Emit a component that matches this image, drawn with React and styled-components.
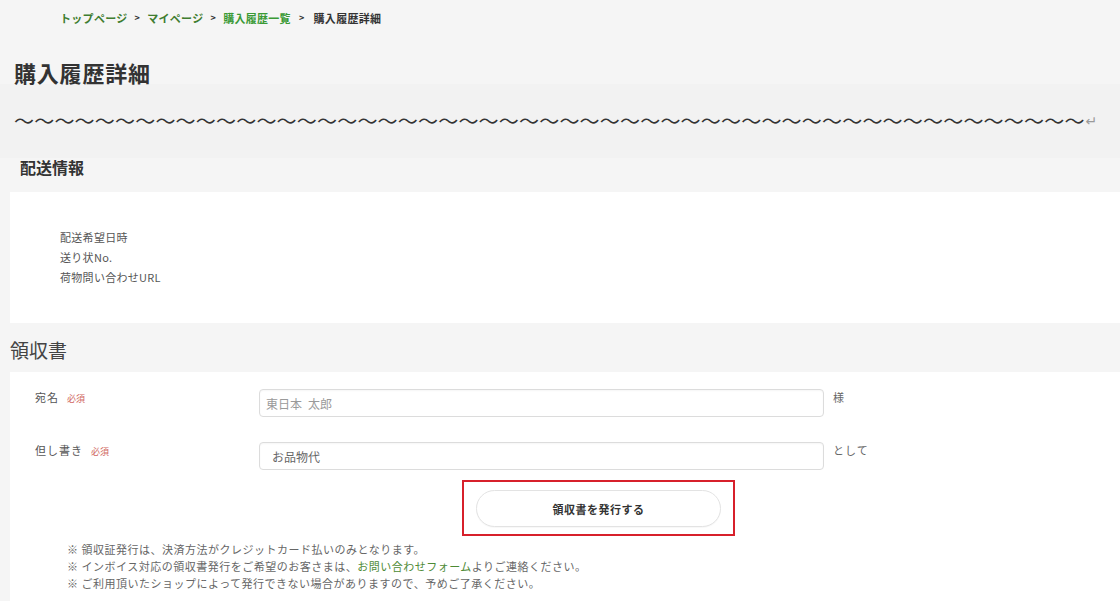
import React from "react";
import styled, { createGlobalStyle } from "styled-components";

const GlobalStyle = createGlobalStyle`
  html, body { margin: 0; padding: 0; background: #f5f5f5; }
  body { font-family: "Noto Sans CJK JP", "Noto Sans", sans-serif; color: #333; }
  #root { min-height: 100vh; }
  * { box-sizing: border-box; }
`;

const Page = styled.div`
  background: #f5f5f5;
  min-height: 601px;
  overflow: hidden;
`;

const Breadcrumb = styled.nav`
  display: flex;
  align-items: center;
  padding: 8px 0 0 60px;
  height: 28px;
  font-size: 11px;
  line-height: 20px;
  font-weight: 700;
  letter-spacing: 0.3px;
`;

const Crumb = styled.a`
  color: ${(p) => (p.$bright ? "#3a9a35" : "#3f7d30")};
  text-decoration: none;
`;

const Current = styled.span`
  color: #333;
`;

const Sep = styled.span`
  color: #333;
  font-size: 9px;
  margin: 0 ${(p) => (p.$wide ? "9px" : "7px")} 0 ${(p) => (p.$wide ? "8px" : "7px")};
`;

const Title = styled.h1`
  margin: 32px 0 0 14px;
  font-size: 22px;
  line-height: 24px;
  height: 24px;
  font-weight: 700;
  letter-spacing: 0.8px;
  color: #333;
`;

const WaveBand = styled.div`
  background: #f2f2f2;
  height: 74px;
  display: flex;
  align-items: center;
  padding-left: 14px;
  white-space: nowrap;
  overflow: hidden;
`;

const Wave = styled.span`
  font-size: 20px;
  line-height: 24px;
  letter-spacing: 0.2px;
  color: #333;
`;

const ReturnMark = styled.span`
  font-family: "DejaVu Sans", sans-serif;
  font-size: 14px;
  color: #9a9a9a;
  margin-left: 1px;
  line-height: 24px;
`;

const SectionHeading = styled.h2`
  margin: 0 0 16px 20px;
  font-size: 16px;
  line-height: 18px;
  font-weight: 700;
  color: #333;
`;

const Panel = styled.section`
  background: #fff;
  margin-left: 10px;
  padding: ${(p) => p.$pad};
  min-height: ${(p) => p.$minh || "0"};
`;

const InfoLine = styled.div`
  font-size: 11px;
  line-height: 20px;
  color: #555;
  letter-spacing: 0.3px;
`;

const ReceiptHeading = styled.h2`
  margin: 0;
  padding: 15px 0 10px 10px;
  font-size: 19px;
  line-height: 24px;
  font-weight: 400;
  color: #444;
`;

const Row = styled.div`
  display: flex;
  align-items: flex-start;
  margin-bottom: ${(p) => p.$mb || "0"};
`;

const Label = styled.div`
  width: 224px;
  font-size: 11px;
  line-height: 16px;
  color: #555;
  letter-spacing: 1px;
`;

const Required = styled.span`
  color: #d0665e;
  font-size: 9px;
  margin-left: 8px;
  letter-spacing: 0;
`;

const Input = styled.input`
  width: 565px;
  height: 28px;
  border: 1px solid #dcdcdc;
  border-radius: 4px;
  box-shadow: inset 0 1px 2px rgba(0, 0, 0, 0.04);
  padding: 0 0 0 ${(p) => p.$padl};
  font-family: "Noto Sans CJK JP", sans-serif;
  font-size: 12px;
  color: #666;
  background: #fff;
  outline: none;
  &::placeholder { color: #9a9a9a; }
`;

const Suffix = styled.span`
  margin-left: 9px;
  font-size: 11px;
  line-height: 16px;
  color: #666;
  letter-spacing: 1px;
`;

const Highlight = styled.div`
  width: 273px;
  height: 56px;
  margin: 10px 0 0 427px;
  border: 2px solid #d7202b;
  padding: 8px 12px;
`;

const IssueButton = styled.button`
  width: 245px;
  height: 37px;
  border: 1px solid #e3e3e3;
  border-radius: 19px;
  background: #fff;
  box-shadow: 0 1px 1px rgba(0, 0, 0, 0.03);
  font-family: "Noto Sans CJK JP", sans-serif;
  font-size: 11px;
  font-weight: 700;
  color: #333;
  letter-spacing: 0.5px;
  cursor: pointer;
`;

const Notes = styled.div`
  padding: 5px 0 0 32px;
  font-size: 11px;
  line-height: 17px;
  color: #666;
  letter-spacing: 0.5px;
`;

const NoteLink = styled.a`
  color: #4d8a35;
  text-decoration: none;
`;

export default function App() {
  return (
    <Page>
      <GlobalStyle />
      <Breadcrumb>
        <Crumb href="#">トップページ</Crumb>
        <Sep>&gt;</Sep>
        <Crumb href="#">マイページ</Crumb>
        <Sep>&gt;</Sep>
        <Crumb href="#" $bright>購入履歴一覧</Crumb>
        <Sep $wide>&gt;</Sep>
        <Current>購入履歴詳細</Current>
      </Breadcrumb>
      <Title>購入履歴詳細</Title>
      <WaveBand>
        <Wave>{"〜".repeat(53)}</Wave>
        <ReturnMark>↵</ReturnMark>
      </WaveBand>
      <SectionHeading>配送情報</SectionHeading>
      <Panel $pad="35px 0 36px 50px">
        <InfoLine>配送希望日時</InfoLine>
        <InfoLine>送り状No.</InfoLine>
        <InfoLine>荷物問い合わせURL</InfoLine>
      </Panel>
      <ReceiptHeading>領収書</ReceiptHeading>
      <Panel $pad="17px 0 20px 25px" $minh="229px">
        <Row $mb="25px">
          <Label>
            宛名<Required>必須</Required>
          </Label>
          <Input $padl="6px" placeholder={"東日本\u2002太郎"} />
          <Suffix>様</Suffix>
        </Row>
        <Row>
          <Label>
            但し書き<Required>必須</Required>
          </Label>
          <Input $padl="12px" defaultValue="お品物代" />
          <Suffix>として</Suffix>
        </Row>
        <Highlight>
          <IssueButton type="button">領収書を発行する</IssueButton>
        </Highlight>
        <Notes>
          <div>※ 領収証発行は、決済方法がクレジットカード払いのみとなります。</div>
          <div>
            ※ インボイス対応の領収書発行をご希望のお客さまは、
            <NoteLink href="#">お問い合わせフォーム</NoteLink>
            よりご連絡ください。
          </div>
          <div>※ ご利用頂いたショップによって発行できない場合がありますので、予めご了承ください。</div>
        </Notes>
      </Panel>
    </Page>
  );
}
